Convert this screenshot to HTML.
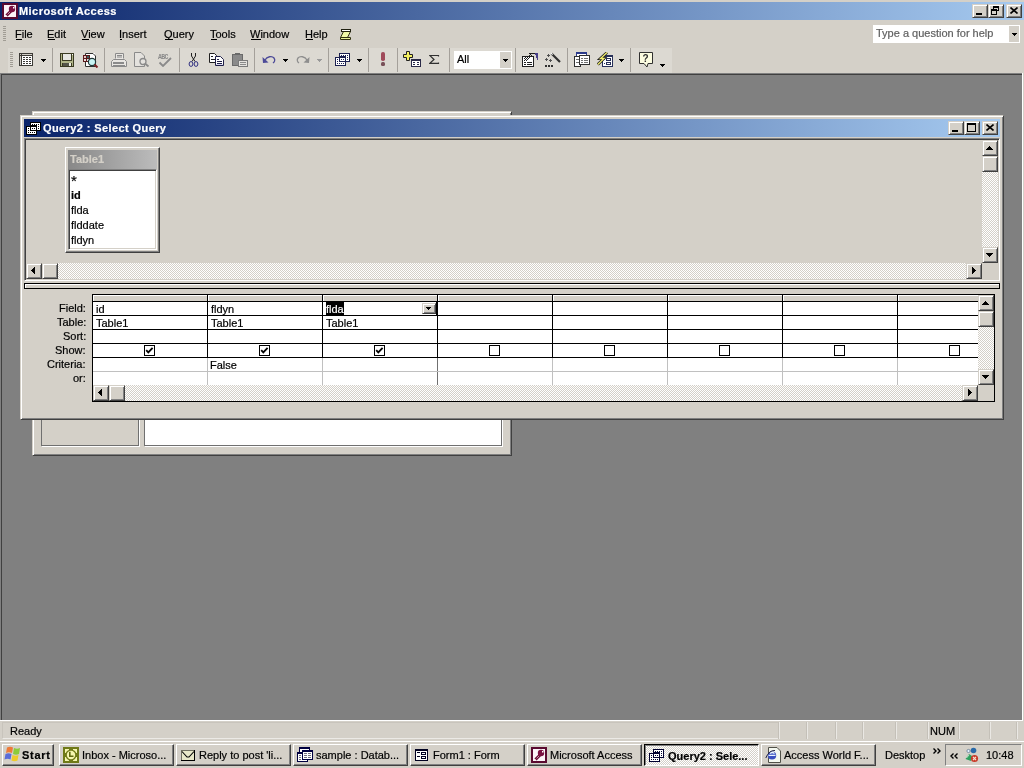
<!DOCTYPE html>
<html><head><meta charset="utf-8">
<style>
*{margin:0;padding:0;box-sizing:border-box}
html,body{width:1024px;height:768px;overflow:hidden;background:#D4D0C8;font-family:"Liberation Sans",sans-serif;font-size:11px;color:#000}
body{position:relative}
.a{position:absolute;display:block}
.t{position:absolute;white-space:nowrap;line-height:12px;font-size:11px;will-change:transform;-webkit-text-stroke-width:0.2px}
</style></head><body>
<div class="a" style="left:0px;top:0px;width:1024px;height:2px;background:#D4D0C8"></div>
<div class="a" style="left:0px;top:2px;width:1024px;height:18px;background:linear-gradient(to right,#0A246A,#A6CAF0)"></div>
<svg class="a" style="left:2px;top:3px;" width="16" height="16" viewBox="0 0 16 16"><rect x="0" y="0" width="16" height="16" fill="#5A0A30"/><rect x="2" y="2" width="12" height="12" fill="#FCF4F8"/><path d="M4.5 12.5 L9.5 7.5" stroke="#6A0A34" stroke-width="3" fill="none"/><path d="M4.5 12.5 L9.5 7.5" stroke="#fff" stroke-width="0.9" stroke-dasharray="1 1" fill="none"/><circle cx="10" cy="6" r="3.2" fill="#7A1040"/><rect x="11" y="4" width="1.5" height="1.5" fill="#fff"/></svg>
<div class="t" style="left:19px;top:5px;color:#fff;font-weight:bold;letter-spacing:0.45px">Microsoft Access</div>
<div class="a" style="left:972px;top:4px;width:16px;height:14px;background:#D4D0C8;border-top:1px solid #D4D0C8;border-left:1px solid #D4D0C8;border-right:1px solid #404040;border-bottom:1px solid #404040;box-shadow:inset 1px 1px 0 #fff,inset -1px -1px 0 #808080"></div>
<div class="a" style="left:988px;top:4px;width:16px;height:14px;background:#D4D0C8;border-top:1px solid #D4D0C8;border-left:1px solid #D4D0C8;border-right:1px solid #404040;border-bottom:1px solid #404040;box-shadow:inset 1px 1px 0 #fff,inset -1px -1px 0 #808080"></div>
<div class="a" style="left:1006px;top:4px;width:16px;height:14px;background:#D4D0C8;border-top:1px solid #D4D0C8;border-left:1px solid #D4D0C8;border-right:1px solid #404040;border-bottom:1px solid #404040;box-shadow:inset 1px 1px 0 #fff,inset -1px -1px 0 #808080"></div>
<svg class="a" style="left:976px;top:13px;" width="6" height="2" viewBox="0 0 6 2" shape-rendering="crispEdges"><rect x="0" y="0" width="6" height="2" fill="#000"/></svg>
<svg class="a" style="left:991px;top:6px;" width="9" height="9" viewBox="0 0 9 9" shape-rendering="crispEdges"><rect x="2" y="0" width="6" height="1" fill="#000"/><rect x="2" y="1" width="6" height="1" fill="#000"/><rect x="2" y="0" width="1" height="3" fill="#000"/><rect x="7" y="0" width="1" height="5" fill="#000"/><rect x="6" y="4" width="2" height="1" fill="#000"/><rect x="0" y="3" width="6" height="1" fill="#000"/><rect x="0" y="4" width="6" height="1" fill="#000"/><rect x="0" y="3" width="1" height="6" fill="#000"/><rect x="5" y="3" width="1" height="6" fill="#000"/><rect x="0" y="8" width="6" height="1" fill="#000"/></svg>
<svg class="a" style="left:1010px;top:7px;" width="8" height="7" viewBox="0 0 8 7"><path d="M0.5 0.5 L7.5 6.5 M7.5 0.5 L0.5 6.5" stroke="#000" stroke-width="1.6" fill="none"/></svg>
<div class="a" style="left:3px;top:26px;width:3px;height:1px;background:#A09C94"></div>
<div class="a" style="left:3px;top:28px;width:3px;height:1px;background:#A09C94"></div>
<div class="a" style="left:3px;top:30px;width:3px;height:1px;background:#A09C94"></div>
<div class="a" style="left:3px;top:32px;width:3px;height:1px;background:#A09C94"></div>
<div class="a" style="left:3px;top:34px;width:3px;height:1px;background:#A09C94"></div>
<div class="a" style="left:3px;top:36px;width:3px;height:1px;background:#A09C94"></div>
<div class="a" style="left:3px;top:38px;width:3px;height:1px;background:#A09C94"></div>
<div class="a" style="left:3px;top:40px;width:3px;height:1px;background:#A09C94"></div>
<div class="t" style="left:15px;top:28px;">File</div>
<div class="a" style="left:16px;top:39px;width:6px;height:1px;background:#000"></div>
<div class="t" style="left:47px;top:28px;">Edit</div>
<div class="a" style="left:48px;top:39px;width:7px;height:1px;background:#000"></div>
<div class="t" style="left:81px;top:28px;">View</div>
<div class="a" style="left:82px;top:39px;width:7px;height:1px;background:#000"></div>
<div class="t" style="left:119px;top:28px;">Insert</div>
<div class="a" style="left:120px;top:39px;width:2px;height:1px;background:#000"></div>
<div class="t" style="left:164px;top:28px;">Query</div>
<div class="a" style="left:165px;top:39px;width:8px;height:1px;background:#000"></div>
<div class="t" style="left:210px;top:28px;">Tools</div>
<div class="a" style="left:211px;top:39px;width:6px;height:1px;background:#000"></div>
<div class="t" style="left:250px;top:28px;">Window</div>
<div class="a" style="left:251px;top:39px;width:10px;height:1px;background:#000"></div>
<div class="t" style="left:305px;top:28px;">Help</div>
<div class="a" style="left:306px;top:39px;width:7px;height:1px;background:#000"></div>
<svg class="a" style="left:339px;top:28px;" width="13" height="13" viewBox="0 0 13 13"><path d="M4.5 3.5 L11.5 3.5 L8.5 9.5 L1.5 9.5 Z" fill="#F0F8A8" stroke="#303010"/><rect x="2.5" y="1.5" width="9" height="2" fill="#fff" stroke="#202010"/><path d="M1.5 9.5 H11.5 V11.5 H1.5 Z" fill="#E8F098" stroke="#303010"/></svg>
<div class="a" style="left:873px;top:25px;width:147px;height:18px;background:#fff"></div>
<div class="a" style="left:1009px;top:26px;width:10px;height:16px;background:#D4D0C8"></div>
<svg class="a" style="left:1012px;top:33px;" width="5" height="3" viewBox="0 0 5 3" shape-rendering="crispEdges"><rect x="0" y="0" width="5" height="1" fill="#000"/><rect x="1" y="1" width="3" height="1" fill="#000"/><rect x="2" y="2" width="1" height="1" fill="#000"/></svg>
<div class="t" style="left:876px;top:27px;color:#606060">Type a question for help</div>
<div class="a" style="left:8px;top:48px;width:664px;height:25px;background:#DCD9D2"></div>
<div class="a" style="left:10px;top:52px;width:3px;height:1px;background:#A09C94"></div>
<div class="a" style="left:10px;top:54px;width:3px;height:1px;background:#A09C94"></div>
<div class="a" style="left:10px;top:56px;width:3px;height:1px;background:#A09C94"></div>
<div class="a" style="left:10px;top:58px;width:3px;height:1px;background:#A09C94"></div>
<div class="a" style="left:10px;top:60px;width:3px;height:1px;background:#A09C94"></div>
<div class="a" style="left:10px;top:62px;width:3px;height:1px;background:#A09C94"></div>
<div class="a" style="left:10px;top:64px;width:3px;height:1px;background:#A09C94"></div>
<div class="a" style="left:10px;top:66px;width:3px;height:1px;background:#A09C94"></div>
<div class="a" style="left:52px;top:48px;width:1px;height:24px;background:#A4A09A"></div>
<div class="a" style="left:104px;top:48px;width:1px;height:24px;background:#A4A09A"></div>
<div class="a" style="left:179px;top:48px;width:1px;height:24px;background:#A4A09A"></div>
<div class="a" style="left:254px;top:48px;width:1px;height:24px;background:#A4A09A"></div>
<div class="a" style="left:328px;top:48px;width:1px;height:24px;background:#A4A09A"></div>
<div class="a" style="left:368px;top:48px;width:1px;height:24px;background:#A4A09A"></div>
<div class="a" style="left:397px;top:48px;width:1px;height:24px;background:#A4A09A"></div>
<div class="a" style="left:449px;top:48px;width:1px;height:24px;background:#A4A09A"></div>
<div class="a" style="left:515px;top:48px;width:1px;height:24px;background:#A4A09A"></div>
<div class="a" style="left:567px;top:48px;width:1px;height:24px;background:#A4A09A"></div>
<div class="a" style="left:630px;top:48px;width:1px;height:24px;background:#A4A09A"></div>
<svg class="a" style="left:19px;top:53px;" width="14" height="13" viewBox="0 0 14 13" shape-rendering="crispEdges"><rect x="0" y="0" width="14" height="13" fill="#3C3A36"/><rect x="1" y="1" width="1" height="1" fill="#D4D0C8"/><rect x="3" y="1" width="10" height="1" fill="#D4D0C8"/><rect x="1" y="3" width="1" height="9" fill="#D4D0C8"/><rect x="3" y="3" width="10" height="9" fill="#fff"/><rect x="4" y="4" width="2" height="1" fill="#3C3A36"/><rect x="4" y="6" width="2" height="1" fill="#3C3A36"/><rect x="4" y="8" width="2" height="1" fill="#3C3A36"/><rect x="4" y="10" width="2" height="1" fill="#3C3A36"/><rect x="7" y="4" width="2" height="1" fill="#3C3A36"/><rect x="7" y="6" width="2" height="1" fill="#3C3A36"/><rect x="7" y="8" width="2" height="1" fill="#3C3A36"/><rect x="7" y="10" width="2" height="1" fill="#3C3A36"/><rect x="10" y="4" width="2" height="1" fill="#3C3A36"/><rect x="10" y="6" width="2" height="1" fill="#3C3A36"/><rect x="10" y="8" width="2" height="1" fill="#3C3A36"/><rect x="10" y="10" width="2" height="1" fill="#3C3A36"/></svg>
<svg class="a" style="left:41px;top:59px;" width="5" height="3" viewBox="0 0 5 3" shape-rendering="crispEdges"><rect x="0" y="0" width="5" height="1" fill="#000"/><rect x="1" y="1" width="3" height="1" fill="#000"/><rect x="2" y="2" width="1" height="1" fill="#000"/></svg>
<svg class="a" style="left:60px;top:53px;" width="14" height="14" viewBox="0 0 14 14" shape-rendering="crispEdges"><rect x="0" y="0" width="14" height="14" fill="#3A3A22"/><rect x="1" y="1" width="1" height="12" fill="#B0B488"/><rect x="12" y="2" width="1" height="11" fill="#B0B488"/><rect x="12" y="1" width="1" height="1" fill="#fff"/><rect x="3" y="1" width="8" height="6" fill="#E6E6E2"/><rect x="2" y="8" width="10" height="2" fill="#B0B488"/><rect x="3" y="10" width="6" height="3" fill="#55554A"/><rect x="9" y="10" width="2" height="3" fill="#EEEEE4"/></svg>
<svg class="a" style="left:82px;top:52px;" width="17" height="16" viewBox="0 0 17 16"><rect x="3" y="1" width="10" height="14" fill="#fff"/><path d="M3.5 1.5 H11 L13.5 4 V14.5 H3.5 Z" fill="none" stroke="#303030"/><rect x="1" y="3" width="7" height="7" fill="#5A1A1A"/><rect x="2" y="4" width="2" height="2" fill="#E8C8C8"/><rect x="5" y="4" width="2" height="2" fill="#3A6060"/><rect x="2" y="7" width="2" height="2" fill="#F0E0E0"/><rect x="5" y="7" width="2" height="2" fill="#E0E0E0"/><circle cx="10" cy="10" r="3.6" fill="#C8F4F4" stroke="#203838" stroke-width="1.2"/><path d="M12.5 12.5 L15.5 15.5" stroke="#7A2020" stroke-width="2"/></svg>
<svg class="a" style="left:111px;top:53px;" width="16" height="14" viewBox="0 0 16 14"><rect x="4" y="0" width="9" height="6" fill="#E8E6E2"/><path d="M4.5 0.5 H12.5 V5.5 M4.5 0.5 V5.5 M6 2.5 H11 M6 4 H11" stroke="#8A8A8A" fill="none"/><path d="M2.5 6.5 H13.5 L15.5 8.5 V13.5 H0.5 V8.5 Z" fill="#E8E6E2" stroke="#8A8A8A"/><rect x="2" y="9" width="11" height="2" fill="#8A8A8A"/><rect x="2" y="12" width="12" height="1" fill="#8A8A8A"/></svg>
<svg class="a" style="left:134px;top:52px;" width="16" height="15" viewBox="0 0 16 15"><path d="M0.5 0.5 H7 L10.5 4 V14.5 H0.5 Z" fill="#E4E2DE" stroke="#8A8A8A"/><circle cx="9" cy="9.5" r="3" fill="#E4E2DE" stroke="#8A8A8A" stroke-width="1.3"/><path d="M11 11.5 L14.5 14.5" stroke="#8A8A8A" stroke-width="1.8"/></svg>
<svg class="a" style="left:158px;top:53px;will-change:transform;" width="14" height="14" viewBox="0 0 14 14"><text x="0" y="6" font-family="Liberation Mono" font-size="6.5" font-weight="bold" fill="#8A8A8A" letter-spacing="-0.6">ABC</text><path d="M1.5 9.5 L5 13 L13 5" stroke="#8A8A8A" stroke-width="1.8" fill="none"/></svg>
<svg class="a" style="left:188px;top:53px;" width="11" height="15" viewBox="0 0 11 15"><path d="M3.5 0 V3 L7 8.5 M7.5 0 V3 L4 8.5" stroke="#202020" stroke-width="1" fill="none"/><ellipse cx="3" cy="11" rx="1.9" ry="2.4" fill="none" stroke="#303080" stroke-width="1"/><ellipse cx="8" cy="11" rx="1.9" ry="2.4" fill="none" stroke="#303080" stroke-width="1"/></svg>
<svg class="a" style="left:209px;top:53px;" width="16" height="14" viewBox="0 0 16 14"><path d="M0.5 0.5 H5.5 L7.5 2.5 V9.5 H0.5 Z" fill="#fff" stroke="#202020"/><rect x="2" y="3" width="2" height="1" fill="#202020"/><rect x="2" y="6" width="4" height="1" fill="#202020"/><path d="M6.5 3.5 H11.5 L14.5 6.5 V12.5 H6.5 Z" fill="#fff" stroke="#202048"/><rect x="8" y="6" width="2" height="1" fill="#202048"/><rect x="8" y="8" width="5" height="1" fill="#202048"/><rect x="8" y="10" width="5" height="1" fill="#202048"/><rect x="7" y="11" width="7" height="1" fill="#D8D8F0"/></svg>
<svg class="a" style="left:232px;top:53px;" width="16" height="14" viewBox="0 0 16 14"><rect x="0.5" y="1.5" width="10" height="11" fill="#8A8A8A" stroke="#6A6A6A"/><rect x="3" y="0" width="5" height="2" fill="#6A6A6A"/><rect x="6.5" y="7.5" width="9" height="6" fill="#E4E2DE" stroke="#7A7A7A"/><rect x="8" y="9" width="6" height="1" fill="#8A8A8A"/><rect x="8" y="11" width="6" height="1" fill="#8A8A8A"/></svg>
<svg class="a" style="left:262px;top:55px;" width="14" height="9" viewBox="0 0 14 9"><path d="M3 5 C5 1.5 10 0.5 12 3 C13.5 5 12.5 7 11 8" stroke="#4C4A98" stroke-width="1.3" fill="none"/><path d="M0.5 2 L1 8 L6.5 7.5 Z" fill="#4C4A98"/></svg>
<svg class="a" style="left:283px;top:59px;" width="5" height="3" viewBox="0 0 5 3" shape-rendering="crispEdges"><rect x="0" y="0" width="5" height="1" fill="#000"/><rect x="1" y="1" width="3" height="1" fill="#000"/><rect x="2" y="2" width="1" height="1" fill="#000"/></svg>
<svg class="a" style="left:296px;top:55px;" width="14" height="9" viewBox="0 0 14 9"><path d="M11 5 C9 1.5 4 0.5 2 3 C0.5 5 1.5 7 3 8" stroke="#8E8E8E" stroke-width="1.3" fill="none"/><path d="M13.5 2 L13 8 L7.5 7.5 Z" fill="#8E8E8E"/></svg>
<svg class="a" style="left:317px;top:59px;" width="5" height="3" viewBox="0 0 5 3" shape-rendering="crispEdges"><rect x="0" y="0" width="5" height="1" fill="#9A9A9A"/><rect x="1" y="1" width="3" height="1" fill="#9A9A9A"/><rect x="2" y="2" width="1" height="1" fill="#9A9A9A"/></svg>
<svg class="a" style="left:335px;top:53px;" width="15" height="13" viewBox="0 0 15 13" shape-rendering="crispEdges"><rect x="4" y="0" width="11" height="9" fill="#1C2050"/><rect x="5" y="1" width="9" height="7" fill="#fff"/><rect x="5" y="2" width="6" height="6" fill="#1C2050"/><rect x="5" y="2" width="1" height="1" fill="#fff"/><rect x="7" y="2" width="1" height="1" fill="#fff"/><rect x="9" y="2" width="1" height="1" fill="#fff"/><rect x="12" y="2" width="1" height="1" fill="#1C2050"/><rect x="12" y="4" width="1" height="1" fill="#1C2050"/><rect x="12" y="6" width="1" height="1" fill="#1C2050"/><rect x="0" y="4" width="11" height="9" fill="#1C2050"/><rect x="1" y="5" width="9" height="7" fill="#fff"/><rect x="4" y="5" width="1" height="4" fill="#1C2050"/><rect x="4" y="8" width="6" height="1" fill="#1C2050"/><rect x="6" y="6" width="1" height="1" fill="#1C2050"/><rect x="8" y="6" width="1" height="1" fill="#1C2050"/><rect x="2" y="6" width="1" height="1" fill="#1C2050"/><rect x="2" y="8" width="1" height="1" fill="#1C2050"/><rect x="2" y="10" width="1" height="1" fill="#1C2050"/><rect x="4" y="10" width="1" height="1" fill="#1C2050"/><rect x="6" y="10" width="1" height="1" fill="#1C2050"/><rect x="8" y="10" width="1" height="1" fill="#1C2050"/></svg>
<svg class="a" style="left:357px;top:59px;" width="5" height="3" viewBox="0 0 5 3" shape-rendering="crispEdges"><rect x="0" y="0" width="5" height="1" fill="#000"/><rect x="1" y="1" width="3" height="1" fill="#000"/><rect x="2" y="2" width="1" height="1" fill="#000"/></svg>
<svg class="a" style="left:380px;top:52px;" width="6" height="14" viewBox="0 0 6 14"><rect x="1" y="0" width="4" height="9" rx="1.8" fill="#A04A5A"/><rect x="1" y="10" width="4" height="4" rx="1.5" fill="#785058"/></svg>
<svg class="a" style="left:403px;top:51px;" width="18" height="16" viewBox="0 0 18 16"><path d="M3.5 0.5 H6.5 V3.5 H9.5 V6.5 H6.5 V9.5 H3.5 V6.5 H0.5 V3.5 H3.5 Z" fill="#F4F060" stroke="#202020"/><rect x="8" y="8" width="10" height="8" fill="#2A2A48"/><rect x="9" y="10" width="8" height="5" fill="#fff"/><rect x="10" y="11" width="2" height="1" fill="#2A2A48"/><rect x="14" y="11" width="2" height="1" fill="#2A2A48"/><rect x="10" y="13" width="2" height="1" fill="#2A2A48"/><rect x="14" y="13" width="2" height="1" fill="#2A2A48"/></svg>
<svg class="a" style="left:429px;top:55px;" width="11" height="9" viewBox="0 0 11 9"><path d="M9.5 1.5 V0.5 H0.8 L5 4.5 L0.8 8.3 H9.5 V7.5" fill="none" stroke="#303030" stroke-width="1.2"/></svg>
<div class="a" style="left:454px;top:51px;width:58px;height:18px;background:#fff"></div>
<div class="a" style="left:500px;top:52px;width:11px;height:16px;background:#D4D0C8"></div>
<svg class="a" style="left:503px;top:59px;" width="5" height="3" viewBox="0 0 5 3" shape-rendering="crispEdges"><rect x="0" y="0" width="5" height="1" fill="#000"/><rect x="1" y="1" width="3" height="1" fill="#000"/><rect x="2" y="2" width="1" height="1" fill="#000"/></svg>
<div class="t" style="left:457px;top:53px;">All</div>
<svg class="a" style="left:522px;top:52px;" width="17" height="15" viewBox="0 0 17 15" shape-rendering="crispEdges"><rect x="0" y="4" width="12" height="11" fill="#202020"/><rect x="1" y="5" width="10" height="9" fill="#fff"/><rect x="2" y="10" width="2" height="1" fill="#202020"/><rect x="5" y="10" width="5" height="1" fill="#202020"/><rect x="2" y="12" width="2" height="1" fill="#202020"/><rect x="5" y="12" width="5" height="1" fill="#202020"/><rect x="1" y="1" width="11" height="3" fill="transparent"/><rect x="8" y="2" width="1" height="1" fill="#202020"/><rect x="7" y="3" width="1" height="1" fill="#202020"/><rect x="9" y="3" width="1" height="1" fill="#202020"/><rect x="4" y="4" width="1" height="1" fill="#202020"/><rect x="6" y="4" width="1" height="1" fill="#202020"/><rect x="8" y="4" width="1" height="1" fill="#202020"/><rect x="3" y="5" width="1" height="1" fill="#202020"/><rect x="5" y="5" width="1" height="1" fill="#202020"/><rect x="7" y="5" width="1" height="1" fill="#202020"/><rect x="2" y="6" width="1" height="1" fill="#202020"/><rect x="4" y="6" width="1" height="1" fill="#202020"/><rect x="6" y="6" width="1" height="1" fill="#202020"/><rect x="3" y="7" width="1" height="1" fill="#202020"/><rect x="5" y="7" width="1" height="1" fill="#202020"/><rect x="2" y="8" width="1" height="1" fill="#202020"/><rect x="4" y="8" width="1" height="1" fill="#202020"/><rect x="7" y="1" width="6" height="1" fill="#202020"/><path d="M12.5 1 L16 0.5 L15.5 8 Z" fill="#48408A"/></svg>
<svg class="a" style="left:545px;top:52px;" width="17" height="16" viewBox="0 0 17 16"><rect x="2" y="3" width="3" height="1" fill="#505050"/><rect x="3" y="2" width="1" height="3" fill="#505050"/><rect x="0" y="7" width="3" height="1" fill="#505050"/><rect x="1" y="6" width="1" height="3" fill="#505050"/><rect x="4" y="8" width="3" height="1" fill="#505050"/><rect x="5" y="7" width="1" height="3" fill="#505050"/><rect x="0" y="13" width="2" height="2" fill="#303030"/><rect x="3" y="13" width="2" height="2" fill="#303030"/><rect x="6" y="13" width="2" height="2" fill="#303030"/><path d="M6.5 1.5 L15 10" stroke="#303030" stroke-width="2.2"/><path d="M6.2 1.2 L7.6 2.6" stroke="#fff" stroke-width="1.2"/></svg>
<svg class="a" style="left:574px;top:52px;" width="16" height="15" viewBox="0 0 16 15" shape-rendering="crispEdges"><rect x="2" y="0" width="11" height="9" fill="#2A3A8A"/><rect x="3" y="2" width="9" height="6" fill="#fff"/><rect x="0" y="4" width="7" height="11" fill="#303030"/><rect x="1" y="5" width="5" height="9" fill="#fff"/><rect x="5" y="3" width="11" height="10" fill="#303030"/><rect x="6" y="4" width="9" height="8" fill="#fff"/><rect x="7" y="6" width="2" height="1" fill="#707070"/><rect x="10" y="6" width="4" height="1" fill="#707070"/><rect x="7" y="8" width="2" height="1" fill="#707070"/><rect x="10" y="8" width="4" height="1" fill="#707070"/><rect x="7" y="10" width="2" height="1" fill="#707070"/><rect x="10" y="10" width="4" height="1" fill="#707070"/><rect x="2" y="7" width="3" height="1" fill="#707070"/><rect x="2" y="10" width="3" height="1" fill="#707070"/></svg>
<svg class="a" style="left:597px;top:52px;" width="17" height="15" viewBox="0 0 17 15"><rect x="5" y="3" width="11" height="12" fill="#283058"/><rect x="6" y="5" width="9" height="9" fill="#fff"/><rect x="9" y="6" width="5" height="3" fill="#283058"/><rect x="10" y="7" width="3" height="1" fill="#fff"/><rect x="9" y="10" width="5" height="3" fill="#283058"/><rect x="10" y="11" width="3" height="1" fill="#fff"/><rect x="7" y="7" width="1" height="1" fill="#283058"/><rect x="7" y="11" width="1" height="1" fill="#283058"/><path d="M10 0.5 L3.5 6.5 H7 L0.8 12.5" stroke="#202020" stroke-width="2.8" fill="none"/><path d="M10 0.5 L3.5 6.5 H7 L0.8 12.5" stroke="#F4F070" stroke-width="1.3" fill="none"/></svg>
<svg class="a" style="left:619px;top:59px;" width="5" height="3" viewBox="0 0 5 3" shape-rendering="crispEdges"><rect x="0" y="0" width="5" height="1" fill="#000"/><rect x="1" y="1" width="3" height="1" fill="#000"/><rect x="2" y="2" width="1" height="1" fill="#000"/></svg>
<svg class="a" style="left:639px;top:52px;will-change:transform;" width="14" height="16" viewBox="0 0 14 16"><path d="M0.5 0.5 H13.5 V11.5 H9 L8 15 L5 11.5 H0.5 Z" fill="#FCFCE0" stroke="#303030"/><text x="3.5" y="9.5" font-family="Liberation Sans" font-weight="bold" font-size="10" fill="#303030">?</text></svg>
<svg class="a" style="left:660px;top:64px;" width="5" height="3" viewBox="0 0 5 3" shape-rendering="crispEdges"><rect x="0" y="0" width="5" height="1" fill="#000"/><rect x="1" y="1" width="3" height="1" fill="#000"/><rect x="2" y="2" width="1" height="1" fill="#000"/></svg>
<div class="a" style="left:0px;top:73px;width:1023px;height:648px;background:#808080;border-right:1px solid #fff;border-bottom:1px solid #fff"></div>
<div class="a" style="left:1px;top:74px;width:1021px;height:646px;border-left:1px solid #404040;border-top:1px solid #404040"></div>
<div class="a" style="left:32px;top:111px;width:480px;height:345px;background:#D4D0C8;border-top:1px solid #D4D0C8;border-left:1px solid #D4D0C8;border-right:1px solid #404040;border-bottom:1px solid #404040;box-shadow:inset 1px 1px 0 #fff,inset -1px -1px 0 #808080"></div>
<div class="a" style="left:41px;top:380px;width:98px;height:66px;background:#D4D0C8;border:1px solid #707070;box-shadow:1px 1px 0 #fff"></div>
<div class="a" style="left:144px;top:380px;width:358px;height:66px;background:#fff;border:1px solid #707070;box-shadow:1px 1px 0 #fff"></div>
<div class="a" style="left:20px;top:115px;width:984px;height:305px;background:#D4D0C8;border-top:1px solid #D4D0C8;border-left:1px solid #D4D0C8;border-right:1px solid #404040;border-bottom:1px solid #404040;box-shadow:inset 1px 1px 0 #fff,inset -1px -1px 0 #808080"></div>
<div class="a" style="left:24px;top:119px;width:976px;height:18px;background:linear-gradient(to right,#0A246A,#A6CAF0)"></div>
<svg class="a" style="left:26px;top:122px;" width="15" height="13" viewBox="0 0 15 13" shape-rendering="crispEdges"><rect x="4" y="0" width="11" height="9" fill="#000"/><rect x="5" y="1" width="9" height="7" fill="#fff"/><rect x="5" y="2" width="6" height="6" fill="#000"/><rect x="5" y="2" width="1" height="1" fill="#fff"/><rect x="7" y="2" width="1" height="1" fill="#fff"/><rect x="9" y="2" width="1" height="1" fill="#fff"/><rect x="12" y="2" width="1" height="1" fill="#000"/><rect x="12" y="4" width="1" height="1" fill="#000"/><rect x="12" y="6" width="1" height="1" fill="#000"/><rect x="0" y="4" width="11" height="9" fill="#000"/><rect x="1" y="5" width="9" height="7" fill="#fff"/><rect x="4" y="5" width="1" height="4" fill="#000"/><rect x="4" y="8" width="6" height="1" fill="#000"/><rect x="6" y="6" width="1" height="1" fill="#000"/><rect x="8" y="6" width="1" height="1" fill="#000"/><rect x="2" y="6" width="1" height="1" fill="#000"/><rect x="2" y="8" width="1" height="1" fill="#000"/><rect x="2" y="10" width="1" height="1" fill="#000"/><rect x="4" y="10" width="1" height="1" fill="#000"/><rect x="6" y="10" width="1" height="1" fill="#000"/><rect x="8" y="10" width="1" height="1" fill="#000"/></svg>
<div class="t" style="left:43px;top:122px;color:#fff;font-weight:bold;letter-spacing:0.4px">Query2 : Select Query</div>
<div class="a" style="left:948px;top:121px;width:16px;height:14px;background:#D4D0C8;border-top:1px solid #D4D0C8;border-left:1px solid #D4D0C8;border-right:1px solid #404040;border-bottom:1px solid #404040;box-shadow:inset 1px 1px 0 #fff,inset -1px -1px 0 #808080"></div>
<div class="a" style="left:964px;top:121px;width:16px;height:14px;background:#D4D0C8;border-top:1px solid #D4D0C8;border-left:1px solid #D4D0C8;border-right:1px solid #404040;border-bottom:1px solid #404040;box-shadow:inset 1px 1px 0 #fff,inset -1px -1px 0 #808080"></div>
<div class="a" style="left:982px;top:121px;width:16px;height:14px;background:#D4D0C8;border-top:1px solid #D4D0C8;border-left:1px solid #D4D0C8;border-right:1px solid #404040;border-bottom:1px solid #404040;box-shadow:inset 1px 1px 0 #fff,inset -1px -1px 0 #808080"></div>
<svg class="a" style="left:952px;top:130px;" width="6" height="2" viewBox="0 0 6 2" shape-rendering="crispEdges"><rect x="0" y="0" width="6" height="2" fill="#000"/></svg>
<svg class="a" style="left:967px;top:123px;" width="9" height="9" viewBox="0 0 9 9" shape-rendering="crispEdges"><rect x="0" y="0" width="9" height="2" fill="#000"/><rect x="0" y="0" width="1" height="9" fill="#000"/><rect x="8" y="0" width="1" height="9" fill="#000"/><rect x="0" y="8" width="9" height="1" fill="#000"/></svg>
<svg class="a" style="left:986px;top:124px;" width="8" height="7" viewBox="0 0 8 7"><path d="M0.5 0.5 L7.5 6.5 M7.5 0.5 L0.5 6.5" stroke="#000" stroke-width="1.6" fill="none"/></svg>
<div class="a" style="left:24px;top:138px;width:976px;height:143px;background:#D4D0C8;border-top:1px solid #808080;border-left:1px solid #808080;border-right:1px solid #fff;border-bottom:1px solid #fff;box-shadow:inset 1px 1px 0 #404040,inset -1px -1px 0 #D4D0C8"></div>
<div class="a" style="left:65px;top:147px;width:95px;height:106px;background:#D4D0C8;border-top:1px solid #fff;border-left:1px solid #fff;border-right:1px solid #404040;border-bottom:1px solid #404040;box-shadow:inset -1px -1px 0 #808080, inset 1px 1px 0 #D4D0C8"></div>
<div class="a" style="left:68px;top:150px;width:89px;height:19px;background:linear-gradient(to right,#888888,#BCBCBC)"></div>
<div class="t" style="left:70px;top:153px;color:#D4D0C8;font-weight:bold">Table1</div>
<div class="a" style="left:68px;top:169px;width:89px;height:81px;background:#fff;border-top:1px solid #808080;border-left:1px solid #808080;border-right:1px solid #fff;border-bottom:1px solid #fff;box-shadow:inset 1px 1px 0 #404040,inset -1px -1px 0 #D4D0C8"></div>
<div class="t" style="left:71px;top:174px;font-size:15px;line-height:13px">*</div>
<div class="t" style="left:71px;top:189px;font-weight:bold">id</div>
<div class="t" style="left:71px;top:204px;">flda</div>
<div class="t" style="left:71px;top:219px;">flddate</div>
<div class="t" style="left:71px;top:234px;">fldyn</div>
<div class="a" style="left:982px;top:140px;width:16px;height:16px;background:#D4D0C8;border-top:1px solid #D4D0C8;border-left:1px solid #D4D0C8;border-right:1px solid #404040;border-bottom:1px solid #404040;box-shadow:inset 1px 1px 0 #fff,inset -1px -1px 0 #808080"></div>
<svg class="a" style="left:986px;top:146px;" width="7" height="4" viewBox="0 0 7 4" shape-rendering="crispEdges"><rect x="3" y="0" width="1" height="1" fill="#000"/><rect x="2" y="1" width="3" height="1" fill="#000"/><rect x="1" y="2" width="5" height="1" fill="#000"/><rect x="0" y="3" width="7" height="1" fill="#000"/></svg>
<div class="a" style="left:982px;top:156px;width:16px;height:16px;background:#D4D0C8;border-top:1px solid #D4D0C8;border-left:1px solid #D4D0C8;border-right:1px solid #404040;border-bottom:1px solid #404040;box-shadow:inset 1px 1px 0 #fff,inset -1px -1px 0 #808080"></div>
<div class="a" style="left:982px;top:172px;width:16px;height:75px;background-color:#fff;background-image:linear-gradient(45deg,#D4D0C8 25%,transparent 25%,transparent 75%,#D4D0C8 75%),linear-gradient(45deg,#D4D0C8 25%,transparent 25%,transparent 75%,#D4D0C8 75%);background-size:2px 2px;background-position:0 0,1px 1px"></div>
<div class="a" style="left:982px;top:247px;width:16px;height:16px;background:#D4D0C8;border-top:1px solid #D4D0C8;border-left:1px solid #D4D0C8;border-right:1px solid #404040;border-bottom:1px solid #404040;box-shadow:inset 1px 1px 0 #fff,inset -1px -1px 0 #808080"></div>
<svg class="a" style="left:986px;top:253px;" width="7" height="4" viewBox="0 0 7 4" shape-rendering="crispEdges"><rect x="0" y="0" width="7" height="1" fill="#000"/><rect x="1" y="1" width="5" height="1" fill="#000"/><rect x="2" y="2" width="3" height="1" fill="#000"/><rect x="3" y="3" width="1" height="1" fill="#000"/></svg>
<div class="a" style="left:26px;top:263px;width:16px;height:16px;background:#D4D0C8;border-top:1px solid #D4D0C8;border-left:1px solid #D4D0C8;border-right:1px solid #404040;border-bottom:1px solid #404040;box-shadow:inset 1px 1px 0 #fff,inset -1px -1px 0 #808080"></div>
<svg class="a" style="left:31px;top:267px;" width="4" height="7" viewBox="0 0 4 7" shape-rendering="crispEdges"><rect x="0" y="3" width="1" height="1" fill="#000"/><rect x="1" y="2" width="1" height="3" fill="#000"/><rect x="2" y="1" width="1" height="5" fill="#000"/><rect x="3" y="0" width="1" height="7" fill="#000"/></svg>
<div class="a" style="left:42px;top:263px;width:16px;height:16px;background:#D4D0C8;border-top:1px solid #D4D0C8;border-left:1px solid #D4D0C8;border-right:1px solid #404040;border-bottom:1px solid #404040;box-shadow:inset 1px 1px 0 #fff,inset -1px -1px 0 #808080"></div>
<div class="a" style="left:58px;top:263px;width:908px;height:16px;background-color:#fff;background-image:linear-gradient(45deg,#D4D0C8 25%,transparent 25%,transparent 75%,#D4D0C8 75%),linear-gradient(45deg,#D4D0C8 25%,transparent 25%,transparent 75%,#D4D0C8 75%);background-size:2px 2px;background-position:0 0,1px 1px"></div>
<div class="a" style="left:966px;top:263px;width:16px;height:16px;background:#D4D0C8;border-top:1px solid #D4D0C8;border-left:1px solid #D4D0C8;border-right:1px solid #404040;border-bottom:1px solid #404040;box-shadow:inset 1px 1px 0 #fff,inset -1px -1px 0 #808080"></div>
<svg class="a" style="left:972px;top:267px;" width="4" height="7" viewBox="0 0 4 7" shape-rendering="crispEdges"><rect x="0" y="0" width="1" height="7" fill="#000"/><rect x="1" y="1" width="1" height="5" fill="#000"/><rect x="2" y="2" width="1" height="3" fill="#000"/><rect x="3" y="3" width="1" height="1" fill="#000"/></svg>
<div class="a" style="left:982px;top:263px;width:16px;height:16px;background:#D4D0C8"></div>
<div class="a" style="left:24px;top:283px;width:976px;height:6px;background:#D4D0C8;border:1px solid #000;box-shadow:inset 1px 1px 0 #fff"></div>
<div class="t" style="right:938px;top:302px;text-align:right">Field:</div>
<div class="t" style="right:938px;top:316px;text-align:right">Table:</div>
<div class="t" style="right:938px;top:330px;text-align:right">Sort:</div>
<div class="t" style="right:938px;top:344px;text-align:right">Show:</div>
<div class="t" style="right:938px;top:358px;text-align:right">Criteria:</div>
<div class="t" style="right:938px;top:372px;text-align:right">or:</div>
<div class="a" style="left:92px;top:294px;width:903px;height:108px;background:#fff;border:1px solid #000"></div>
<div class="a" style="left:93px;top:295px;width:885px;height:6px;background:#D4D0C8;border-top:1px solid #fff"></div>
<div class="a" style="left:93px;top:295px;width:1px;height:6px;background:#fff"></div>
<div class="a" style="left:208px;top:295px;width:1px;height:6px;background:#fff"></div>
<div class="a" style="left:323px;top:295px;width:1px;height:6px;background:#fff"></div>
<div class="a" style="left:438px;top:295px;width:1px;height:6px;background:#fff"></div>
<div class="a" style="left:553px;top:295px;width:1px;height:6px;background:#fff"></div>
<div class="a" style="left:668px;top:295px;width:1px;height:6px;background:#fff"></div>
<div class="a" style="left:783px;top:295px;width:1px;height:6px;background:#fff"></div>
<div class="a" style="left:898px;top:295px;width:1px;height:6px;background:#fff"></div>
<div class="a" style="left:207px;top:295px;width:1px;height:63px;background:#000"></div>
<div class="a" style="left:207px;top:358px;width:1px;height:27px;background:#C0C0C0"></div>
<div class="a" style="left:322px;top:295px;width:1px;height:63px;background:#000"></div>
<div class="a" style="left:322px;top:358px;width:1px;height:27px;background:#C0C0C0"></div>
<div class="a" style="left:437px;top:295px;width:1px;height:63px;background:#000"></div>
<div class="a" style="left:437px;top:358px;width:1px;height:27px;background:#707070"></div>
<div class="a" style="left:552px;top:295px;width:1px;height:63px;background:#000"></div>
<div class="a" style="left:552px;top:358px;width:1px;height:27px;background:#C0C0C0"></div>
<div class="a" style="left:667px;top:295px;width:1px;height:63px;background:#000"></div>
<div class="a" style="left:667px;top:358px;width:1px;height:27px;background:#C0C0C0"></div>
<div class="a" style="left:782px;top:295px;width:1px;height:63px;background:#000"></div>
<div class="a" style="left:782px;top:358px;width:1px;height:27px;background:#C0C0C0"></div>
<div class="a" style="left:897px;top:295px;width:1px;height:63px;background:#000"></div>
<div class="a" style="left:897px;top:358px;width:1px;height:27px;background:#C0C0C0"></div>
<div class="a" style="left:93px;top:301px;width:885px;height:1px;background:#000"></div>
<div class="a" style="left:93px;top:315px;width:885px;height:1px;background:#000"></div>
<div class="a" style="left:93px;top:329px;width:885px;height:1px;background:#000"></div>
<div class="a" style="left:93px;top:343px;width:885px;height:1px;background:#000"></div>
<div class="a" style="left:93px;top:357px;width:885px;height:1px;background:#000"></div>
<div class="a" style="left:93px;top:371px;width:885px;height:1px;background:#C0C0C0"></div>
<svg class="a" style="left:144px;top:345px;" width="11" height="11" viewBox="0 0 11 11"><rect x="0" y="0" width="11" height="11" fill="#000"/><rect x="1" y="1" width="9" height="9" fill="#fff"/><path d="M2.2 5.2 L4.3 7.4 L8.6 2.8" stroke="#000" stroke-width="1.8" fill="none"/></svg>
<svg class="a" style="left:259px;top:345px;" width="11" height="11" viewBox="0 0 11 11"><rect x="0" y="0" width="11" height="11" fill="#000"/><rect x="1" y="1" width="9" height="9" fill="#fff"/><path d="M2.2 5.2 L4.3 7.4 L8.6 2.8" stroke="#000" stroke-width="1.8" fill="none"/></svg>
<svg class="a" style="left:374px;top:345px;" width="11" height="11" viewBox="0 0 11 11"><rect x="0" y="0" width="11" height="11" fill="#000"/><rect x="1" y="1" width="9" height="9" fill="#fff"/><path d="M2.2 5.2 L4.3 7.4 L8.6 2.8" stroke="#000" stroke-width="1.8" fill="none"/></svg>
<svg class="a" style="left:489px;top:345px;" width="11" height="11" viewBox="0 0 11 11" shape-rendering="crispEdges"><rect x="0" y="0" width="11" height="11" fill="#000"/><rect x="1" y="1" width="9" height="9" fill="#fff"/></svg>
<svg class="a" style="left:604px;top:345px;" width="11" height="11" viewBox="0 0 11 11" shape-rendering="crispEdges"><rect x="0" y="0" width="11" height="11" fill="#000"/><rect x="1" y="1" width="9" height="9" fill="#fff"/></svg>
<svg class="a" style="left:719px;top:345px;" width="11" height="11" viewBox="0 0 11 11" shape-rendering="crispEdges"><rect x="0" y="0" width="11" height="11" fill="#000"/><rect x="1" y="1" width="9" height="9" fill="#fff"/></svg>
<svg class="a" style="left:834px;top:345px;" width="11" height="11" viewBox="0 0 11 11" shape-rendering="crispEdges"><rect x="0" y="0" width="11" height="11" fill="#000"/><rect x="1" y="1" width="9" height="9" fill="#fff"/></svg>
<svg class="a" style="left:949px;top:345px;" width="11" height="11" viewBox="0 0 11 11" shape-rendering="crispEdges"><rect x="0" y="0" width="11" height="11" fill="#000"/><rect x="1" y="1" width="9" height="9" fill="#fff"/></svg>
<div class="t" style="left:96px;top:303px;">id</div>
<div class="t" style="left:96px;top:317px;">Table1</div>
<div class="t" style="left:211px;top:303px;">fldyn</div>
<div class="t" style="left:211px;top:317px;">Table1</div>
<div class="t" style="left:210px;top:359px;">False</div>
<div class="a" style="left:326px;top:302px;width:18px;height:13px;background:#000"></div>
<div class="t" style="left:326px;top:303px;color:#fff">flda</div>
<div class="t" style="left:326px;top:317px;">Table1</div>
<div class="a" style="left:422px;top:303px;width:14px;height:11px;background:#D4D0C8;border-top:1px solid #D4D0C8;border-left:1px solid #D4D0C8;border-right:1px solid #404040;border-bottom:1px solid #404040;box-shadow:inset 1px 1px 0 #fff,inset -1px -1px 0 #808080"></div>
<svg class="a" style="left:426px;top:307px;" width="5" height="3" viewBox="0 0 5 3" shape-rendering="crispEdges"><rect x="0" y="0" width="5" height="1" fill="#000"/><rect x="1" y="1" width="3" height="1" fill="#000"/><rect x="2" y="2" width="1" height="1" fill="#000"/></svg>
<div class="a" style="left:436px;top:302px;width:1px;height:13px;background:#000"></div>
<div class="a" style="left:978px;top:295px;width:16px;height:16px;background:#D4D0C8;border-top:1px solid #D4D0C8;border-left:1px solid #D4D0C8;border-right:1px solid #404040;border-bottom:1px solid #404040;box-shadow:inset 1px 1px 0 #fff,inset -1px -1px 0 #808080"></div>
<svg class="a" style="left:982px;top:301px;" width="7" height="4" viewBox="0 0 7 4" shape-rendering="crispEdges"><rect x="3" y="0" width="1" height="1" fill="#000"/><rect x="2" y="1" width="3" height="1" fill="#000"/><rect x="1" y="2" width="5" height="1" fill="#000"/><rect x="0" y="3" width="7" height="1" fill="#000"/></svg>
<div class="a" style="left:978px;top:311px;width:16px;height:16px;background:#D4D0C8;border-top:1px solid #D4D0C8;border-left:1px solid #D4D0C8;border-right:1px solid #404040;border-bottom:1px solid #404040;box-shadow:inset 1px 1px 0 #fff,inset -1px -1px 0 #808080"></div>
<div class="a" style="left:978px;top:327px;width:16px;height:42px;background-color:#fff;background-image:linear-gradient(45deg,#D4D0C8 25%,transparent 25%,transparent 75%,#D4D0C8 75%),linear-gradient(45deg,#D4D0C8 25%,transparent 25%,transparent 75%,#D4D0C8 75%);background-size:2px 2px;background-position:0 0,1px 1px"></div>
<div class="a" style="left:978px;top:369px;width:16px;height:16px;background:#D4D0C8;border-top:1px solid #D4D0C8;border-left:1px solid #D4D0C8;border-right:1px solid #404040;border-bottom:1px solid #404040;box-shadow:inset 1px 1px 0 #fff,inset -1px -1px 0 #808080"></div>
<svg class="a" style="left:982px;top:375px;" width="7" height="4" viewBox="0 0 7 4" shape-rendering="crispEdges"><rect x="0" y="0" width="7" height="1" fill="#000"/><rect x="1" y="1" width="5" height="1" fill="#000"/><rect x="2" y="2" width="3" height="1" fill="#000"/><rect x="3" y="3" width="1" height="1" fill="#000"/></svg>
<div class="a" style="left:93px;top:385px;width:16px;height:16px;background:#D4D0C8;border-top:1px solid #D4D0C8;border-left:1px solid #D4D0C8;border-right:1px solid #404040;border-bottom:1px solid #404040;box-shadow:inset 1px 1px 0 #fff,inset -1px -1px 0 #808080"></div>
<svg class="a" style="left:98px;top:389px;" width="4" height="7" viewBox="0 0 4 7" shape-rendering="crispEdges"><rect x="0" y="3" width="1" height="1" fill="#000"/><rect x="1" y="2" width="1" height="3" fill="#000"/><rect x="2" y="1" width="1" height="5" fill="#000"/><rect x="3" y="0" width="1" height="7" fill="#000"/></svg>
<div class="a" style="left:109px;top:385px;width:16px;height:16px;background:#D4D0C8;border-top:1px solid #D4D0C8;border-left:1px solid #D4D0C8;border-right:1px solid #404040;border-bottom:1px solid #404040;box-shadow:inset 1px 1px 0 #fff,inset -1px -1px 0 #808080"></div>
<div class="a" style="left:125px;top:385px;width:837px;height:16px;background-color:#fff;background-image:linear-gradient(45deg,#D4D0C8 25%,transparent 25%,transparent 75%,#D4D0C8 75%),linear-gradient(45deg,#D4D0C8 25%,transparent 25%,transparent 75%,#D4D0C8 75%);background-size:2px 2px;background-position:0 0,1px 1px"></div>
<div class="a" style="left:962px;top:385px;width:16px;height:16px;background:#D4D0C8;border-top:1px solid #D4D0C8;border-left:1px solid #D4D0C8;border-right:1px solid #404040;border-bottom:1px solid #404040;box-shadow:inset 1px 1px 0 #fff,inset -1px -1px 0 #808080"></div>
<svg class="a" style="left:968px;top:389px;" width="4" height="7" viewBox="0 0 4 7" shape-rendering="crispEdges"><rect x="0" y="0" width="1" height="7" fill="#000"/><rect x="1" y="1" width="1" height="5" fill="#000"/><rect x="2" y="2" width="1" height="3" fill="#000"/><rect x="3" y="3" width="1" height="1" fill="#000"/></svg>
<div class="a" style="left:978px;top:385px;width:16px;height:16px;background:#D4D0C8"></div>
<div class="a" style="left:2px;top:722px;width:776px;height:17px;border-top:1px solid #C8C4BC;border-left:1px solid #C8C4BC;border-bottom:1px solid #ECEAE6"></div>
<div class="t" style="left:10px;top:725px;">Ready</div>
<div class="a" style="left:778px;top:722px;width:1px;height:17px;background:#C4C0B8"></div>
<div class="a" style="left:779px;top:722px;width:1px;height:17px;background:#EAE8E4"></div>
<div class="a" style="left:806px;top:722px;width:1px;height:17px;background:#C4C0B8"></div>
<div class="a" style="left:807px;top:722px;width:1px;height:17px;background:#EAE8E4"></div>
<div class="a" style="left:835px;top:722px;width:1px;height:17px;background:#C4C0B8"></div>
<div class="a" style="left:836px;top:722px;width:1px;height:17px;background:#EAE8E4"></div>
<div class="a" style="left:862px;top:722px;width:1px;height:17px;background:#C4C0B8"></div>
<div class="a" style="left:863px;top:722px;width:1px;height:17px;background:#EAE8E4"></div>
<div class="a" style="left:895px;top:722px;width:1px;height:17px;background:#C4C0B8"></div>
<div class="a" style="left:896px;top:722px;width:1px;height:17px;background:#EAE8E4"></div>
<div class="a" style="left:927px;top:722px;width:1px;height:17px;background:#C4C0B8"></div>
<div class="a" style="left:928px;top:722px;width:1px;height:17px;background:#EAE8E4"></div>
<div class="a" style="left:958px;top:722px;width:1px;height:17px;background:#C4C0B8"></div>
<div class="a" style="left:959px;top:722px;width:1px;height:17px;background:#EAE8E4"></div>
<div class="a" style="left:989px;top:722px;width:1px;height:17px;background:#C4C0B8"></div>
<div class="a" style="left:990px;top:722px;width:1px;height:17px;background:#EAE8E4"></div>
<div class="a" style="left:1016px;top:722px;width:1px;height:17px;background:#C4C0B8"></div>
<div class="a" style="left:1017px;top:722px;width:1px;height:17px;background:#EAE8E4"></div>
<div class="t" style="left:930px;top:725px;">NUM</div>
<div class="a" style="left:0px;top:741px;width:1024px;height:1px;background:#fff"></div>
<div class="a" style="left:2px;top:744px;width:52px;height:22px;background:#D4D0C8;border-top:1px solid #fff;border-left:1px solid #fff;border-right:1px solid #404040;border-bottom:1px solid #404040;box-shadow:inset -1px -1px 0 #808080"></div>
<svg class="a" style="left:4px;top:746px;filter:blur(0.3px);" width="17" height="16" viewBox="0 0 17 16"><path d="M3 1.5 Q6 0 9 1.5 L8 7 Q5 5.5 2 7 Z" fill="#EE7A38"/><path d="M10 2 Q13 3.5 16 2 L15 8 Q12 9.5 9 8 Z" fill="#8CCC3A"/><path d="M1.5 8 Q4.5 6.5 7.5 8 L6.5 13.5 Q3.5 12 0.5 13.5 Z" fill="#5A6CD8"/><path d="M8.5 9 Q11.5 10.5 14.5 9 L13.5 14.5 Q10.5 16 7.5 14.5 Z" fill="#EFCB28"/></svg>
<div class="t" style="left:22px;top:749px;font-weight:bold;letter-spacing:0.7px">Start</div>
<div class="a" style="left:59px;top:744px;width:115px;height:22px;background:#D4D0C8;border-top:1px solid #fff;border-left:1px solid #fff;border-right:1px solid #404040;border-bottom:1px solid #404040;box-shadow:inset -1px -1px 0 #808080"></div>
<svg class="a" style="left:63px;top:747px;" width="16" height="16" viewBox="0 0 16 16"><rect x="0" y="0" width="16" height="16" fill="#707A18"/><rect x="2" y="2" width="4" height="4" fill="#F6F6B0"/><rect x="10" y="2" width="4" height="4" fill="#F6F6B0"/><rect x="2" y="10" width="4" height="4" fill="#F6F6B0"/><rect x="10" y="10" width="4" height="4" fill="#F6F6B0"/><circle cx="8" cy="8" r="5.6" fill="#707A18"/><circle cx="8" cy="8" r="4.2" fill="#F6F6B0"/><path d="M6.8 4.8 V9.2 H10.5" stroke="#606A10" stroke-width="1.6" fill="none"/></svg>
<div class="t" style="left:82px;top:749px;">Inbox - Microso...</div>
<div class="a" style="left:176px;top:744px;width:115px;height:22px;background:#D4D0C8;border-top:1px solid #fff;border-left:1px solid #fff;border-right:1px solid #404040;border-bottom:1px solid #404040;box-shadow:inset -1px -1px 0 #808080"></div>
<svg class="a" style="left:181px;top:750px;" width="14" height="11" viewBox="0 0 14 11"><rect x="0" y="0" width="14" height="11" fill="#E8E8C8"/><rect x="0" y="0" width="14" height="1" fill="#707060"/><rect x="0" y="0" width="1" height="11" fill="#707060"/><rect x="13" y="0" width="1" height="11" fill="#000"/><rect x="0" y="10" width="14" height="1" fill="#000"/><path d="M1 1.5 L6 7 H8 L13 1.5" stroke="#000" stroke-width="1.1" fill="none"/></svg>
<div class="t" style="left:199px;top:749px;">Reply to post 'li...</div>
<div class="a" style="left:293px;top:744px;width:115px;height:22px;background:#D4D0C8;border-top:1px solid #fff;border-left:1px solid #fff;border-right:1px solid #404040;border-bottom:1px solid #404040;box-shadow:inset -1px -1px 0 #808080"></div>
<svg class="a" style="left:297px;top:747px;" width="16" height="15" viewBox="0 0 16 15" shape-rendering="crispEdges"><rect x="2" y="0" width="11" height="6" fill="#000040"/><rect x="3" y="2" width="9" height="3" fill="#fff"/><rect x="0" y="5" width="11" height="10" fill="#000040"/><rect x="1" y="7" width="9" height="7" fill="#fff"/><rect x="2" y="8" width="2" height="1" fill="#707080"/><rect x="2" y="10" width="2" height="1" fill="#707080"/><rect x="2" y="12" width="2" height="1" fill="#707080"/><rect x="5" y="3" width="11" height="10" fill="#000040"/><rect x="6" y="5" width="9" height="7" fill="#fff"/><rect x="7" y="6" width="3" height="1" fill="#707080"/><rect x="11" y="6" width="3" height="1" fill="#707080"/><rect x="7" y="8" width="3" height="1" fill="#707080"/><rect x="11" y="8" width="3" height="1" fill="#707080"/><rect x="7" y="10" width="3" height="1" fill="#707080"/><rect x="11" y="10" width="3" height="1" fill="#707080"/></svg>
<div class="t" style="left:316px;top:749px;">sample : Datab...</div>
<div class="a" style="left:410px;top:744px;width:115px;height:22px;background:#D4D0C8;border-top:1px solid #fff;border-left:1px solid #fff;border-right:1px solid #404040;border-bottom:1px solid #404040;box-shadow:inset -1px -1px 0 #808080"></div>
<svg class="a" style="left:415px;top:749px;" width="13" height="12" viewBox="0 0 13 12" shape-rendering="crispEdges"><rect x="0" y="0" width="13" height="12" fill="#000020"/><rect x="1" y="2" width="11" height="9" fill="#fff"/><rect x="2" y="3" width="3" height="1" fill="#000020"/><rect x="2" y="7" width="3" height="1" fill="#000020"/><rect x="6" y="3" width="5" height="3" fill="#000020"/><rect x="7" y="4" width="3" height="1" fill="#fff"/><rect x="6" y="7" width="5" height="3" fill="#000020"/><rect x="7" y="8" width="3" height="1" fill="#fff"/></svg>
<div class="t" style="left:433px;top:749px;">Form1 : Form</div>
<div class="a" style="left:527px;top:744px;width:115px;height:22px;background:#D4D0C8;border-top:1px solid #fff;border-left:1px solid #fff;border-right:1px solid #404040;border-bottom:1px solid #404040;box-shadow:inset -1px -1px 0 #808080"></div>
<svg class="a" style="left:531px;top:747px;" width="16" height="16" viewBox="0 0 16 16"><rect x="0" y="0" width="16" height="16" fill="#5A0A30"/><rect x="2" y="2" width="12" height="12" fill="#FCF4F8"/><path d="M4.5 12.5 L9.5 7.5" stroke="#6A0A34" stroke-width="3" fill="none"/><path d="M4.5 12.5 L9.5 7.5" stroke="#fff" stroke-width="0.9" stroke-dasharray="1 1" fill="none"/><circle cx="10" cy="6" r="3.2" fill="#7A1040"/><rect x="11" y="4" width="1.5" height="1.5" fill="#fff"/></svg>
<div class="t" style="left:550px;top:749px;">Microsoft Access</div>
<div class="a" style="left:644px;top:744px;width:115px;height:22px;background-color:#fff;background-image:linear-gradient(45deg,#D4D0C8 25%,transparent 25%,transparent 75%,#D4D0C8 75%),linear-gradient(45deg,#D4D0C8 25%,transparent 25%,transparent 75%,#D4D0C8 75%);background-size:2px 2px;background-position:0 0,1px 1px;border-top:1px solid #000;border-left:1px solid #000;border-right:1px solid #fff;border-bottom:1px solid #fff;box-shadow:inset 1px 1px 0 #808080"></div>
<svg class="a" style="left:649px;top:749px;" width="15" height="13" viewBox="0 0 15 13" shape-rendering="crispEdges"><rect x="4" y="0" width="11" height="9" fill="#000030"/><rect x="5" y="1" width="9" height="7" fill="#fff"/><rect x="5" y="2" width="6" height="6" fill="#000030"/><rect x="5" y="2" width="1" height="1" fill="#fff"/><rect x="7" y="2" width="1" height="1" fill="#fff"/><rect x="9" y="2" width="1" height="1" fill="#fff"/><rect x="12" y="2" width="1" height="1" fill="#000030"/><rect x="12" y="4" width="1" height="1" fill="#000030"/><rect x="12" y="6" width="1" height="1" fill="#000030"/><rect x="0" y="4" width="11" height="9" fill="#000030"/><rect x="1" y="5" width="9" height="7" fill="#fff"/><rect x="4" y="5" width="1" height="4" fill="#000030"/><rect x="4" y="8" width="6" height="1" fill="#000030"/><rect x="6" y="6" width="1" height="1" fill="#000030"/><rect x="8" y="6" width="1" height="1" fill="#000030"/><rect x="2" y="6" width="1" height="1" fill="#000030"/><rect x="2" y="8" width="1" height="1" fill="#000030"/><rect x="2" y="10" width="1" height="1" fill="#000030"/><rect x="4" y="10" width="1" height="1" fill="#000030"/><rect x="6" y="10" width="1" height="1" fill="#000030"/><rect x="8" y="10" width="1" height="1" fill="#000030"/></svg>
<div class="t" style="left:668px;top:750px;font-weight:bold">Query2 : Sele...</div>
<div class="a" style="left:761px;top:744px;width:115px;height:22px;background:#D4D0C8;border-top:1px solid #fff;border-left:1px solid #fff;border-right:1px solid #404040;border-bottom:1px solid #404040;box-shadow:inset -1px -1px 0 #808080"></div>
<svg class="a" style="left:765px;top:747px;" width="16" height="16" viewBox="0 0 16 16"><path d="M3.5 0.5 H12 L15.5 4 V15.5 H3.5 Z" fill="#F4F8F0" stroke="#505048"/><ellipse cx="7" cy="8.5" rx="4.2" ry="4" fill="#3A50C0"/><path d="M3.5 8.3 H10.5 M5 6.5 Q7 4.5 9.5 6.5" stroke="#E8F4FF" stroke-width="1.3" fill="none"/><path d="M0.8 11 Q4 3 10 3.5" stroke="#202040" stroke-width="1" fill="none"/></svg>
<div class="t" style="left:784px;top:749px;">Access World F...</div>
<div class="t" style="left:885px;top:749px;">Desktop</div>
<svg class="a" style="left:933px;top:748px;" width="8" height="6" viewBox="0 0 8 6"><path d="M0.5 0.5 L3 3 L0.5 5.5 M4.5 0.5 L7 3 L4.5 5.5" stroke="#000" stroke-width="1.4" fill="none"/></svg>
<div class="a" style="left:945px;top:744px;width:77px;height:22px;border-top:1px solid #808080;border-left:1px solid #808080;border-right:1px solid #fff;border-bottom:1px solid #fff"></div>
<svg class="a" style="left:950px;top:753px;" width="8" height="6" viewBox="0 0 8 6"><path d="M3.5 0.5 L1 3 L3.5 5.5 M7.5 0.5 L5 3 L7.5 5.5" stroke="#000" stroke-width="1.4" fill="none"/></svg>
<svg class="a" style="left:964px;top:747px;" width="16" height="16" viewBox="0 0 16 16"><circle cx="4.5" cy="4" r="1.6" fill="#E8F4FF" stroke="#406080" stroke-width="0.6"/><circle cx="9.5" cy="3.5" r="2.8" fill="#2A6AA8"/><path d="M1.5 12 L5 7 L8 9 L7 14 Z" fill="#30A060"/><path d="M2.5 11 L5 8" stroke="#D8F0E0" stroke-width="0.8"/><circle cx="10.5" cy="11.5" r="3.6" fill="#C83A28"/><path d="M9 10 L12 13 M12 10 L9 13" stroke="#F8E0D0" stroke-width="1.1"/></svg>
<div class="t" style="left:986px;top:749px;">10:48</div>
</body></html>
